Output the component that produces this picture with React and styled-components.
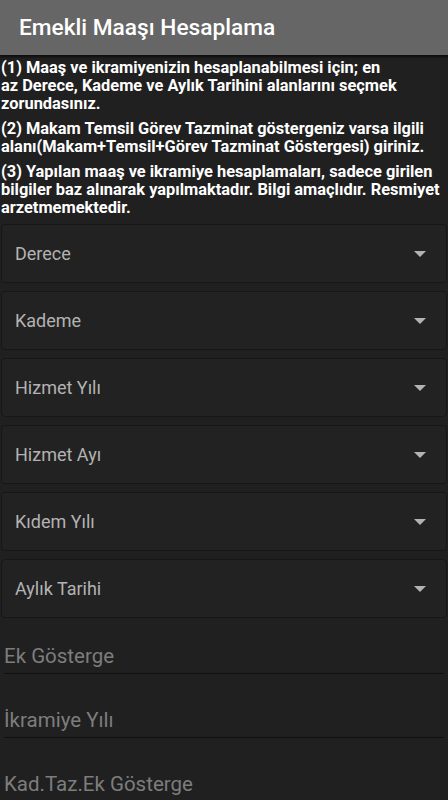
import React from 'react'
import styled, { createGlobalStyle } from 'styled-components'

const GlobalStyle = createGlobalStyle`
  html, body {
    margin: 0;
    padding: 0;
    background: #202020;
    font-family: Roboto, "Noto Sans", sans-serif;
  }
`

const Page = styled.div`
  width: 448px;
  min-height: 800px;
  background: #202020;
  overflow: hidden;
`

const Toolbar = styled.header`
  height: 55px;
  background: #666666;
  display: flex;
  align-items: center;
  padding-left: 19px;
  color: #ffffff;
  font-size: 22.7px;
  font-weight: 500;
  box-shadow: 0 2px 2px rgba(0, 0, 0, 0.6);
  position: relative;
`

const Notes = styled.div`
  padding: 4px 1px 0 1px;
  color: #ffffff;
  font-size: 16.4px;
  font-weight: 700;
  line-height: 18px;
  display: flex;
  flex-direction: column;
  gap: 7px;
`

const Note = styled.p`
  margin: 0;
`

const Form = styled.div`
  display: flex;
  flex-direction: column;
  gap: 8px;
  padding: 7px 1px 0 1px;
`

const Select = styled.div`
  height: 59px;
  box-sizing: border-box;
  background: #222222;
  border: 1px solid #171717;
  border-radius: 4px;
  display: flex;
  align-items: center;
  justify-content: space-between;
  padding: 0 20px 0 13px;
  color: #b3b3b3;
  font-size: 18px;
`

const Caret = styled.span`
  width: 0;
  height: 0;
  border-left: 6px solid transparent;
  border-right: 6px solid transparent;
  border-top: 6px solid #b3b3b3;
`

const Inputs = styled.div`
  display: flex;
  flex-direction: column;
  gap: 16px;
`

const Field = styled.div`
  padding: 18px 3px 0 3px;
`

const FieldLabel = styled.div`
  color: #7d7d7d;
  font-size: 20.5px;
  line-height: 24px;
  padding: 0 0 5px 0;
  border-bottom: ${p => (p.$last ? 'none' : '1px solid #111111')};
`

const selects = ['Derece', 'Kademe', 'Hizmet Yılı', 'Hizmet Ayı', 'Kıdem Yılı', 'Aylık Tarihi']
const inputs = ['Ek Gösterge', 'İkramiye Yılı', 'Kad.Taz.Ek Gösterge']

export default function App() {
  return (
    <Page>
      <GlobalStyle />
      <Toolbar>Emekli Maaşı Hesaplama</Toolbar>
      <Notes>
        <Note>(1) Maaş ve ikramiyenizin hesaplanabilmesi için; en<br />az Derece, Kademe ve Aylık Tarihini alanlarını seçmek zorundasınız.</Note>
        <Note>(2) Makam Temsil Görev Tazminat göstergeniz varsa ilgili alanı(Makam+Temsil+Görev Tazminat Göstergesi) giriniz.</Note>
        <Note>(3) Yapılan maaş ve ikramiye hesaplamaları, sadece girilen bilgiler baz alınarak yapılmaktadır. Bilgi amaçlıdır. Resmiyet arzetmemektedir.</Note>
      </Notes>
      <Form>
        {selects.map(s => (
          <Select key={s}>
            <span>{s}</span>
            <Caret />
          </Select>
        ))}
        <Inputs>
          {inputs.map((s, i) => (
            <Field key={s}>
              <FieldLabel $last={i === inputs.length - 1}>{s}</FieldLabel>
            </Field>
          ))}
        </Inputs>
      </Form>
    </Page>
  )
}
